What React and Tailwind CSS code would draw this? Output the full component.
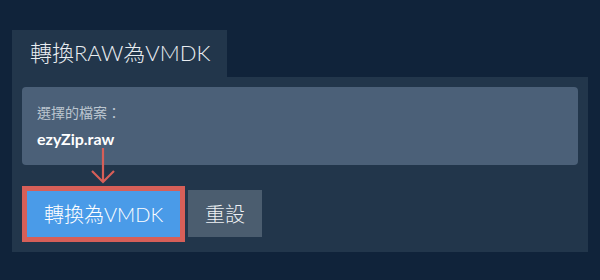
export default function App() {
  return (
    <div
      className="w-[600px] h-[280px] bg-[#10233a] pt-[30px] px-3"
      style={{ fontFamily: 'Lato, "Noto Sans CJK TC", sans-serif' }}
    >
      <div className="w-[215px] h-[47px] bg-[#22364b] flex items-center pl-[18px] pb-[2px] text-[22px] font-light text-[#e9edf1]">
        轉換RAW為VMDK
      </div>
      <div className="relative w-[576px] h-[175px] bg-[#22364b] p-[10px]">
        <div className="h-[78px] rounded-[4px] bg-[#4b6078] pl-[15px] pt-[16px]">
          <div className="text-[14px] leading-[20px] text-[#bcc6d0]">選擇的檔案：</div>
          <div className="mt-[6px] text-[16px] leading-[20px] font-bold text-white">ezyZip.raw</div>
        </div>
        <div className="flex gap-2 mt-[26px] ml-[5px]">
          <button className="w-[153px] h-[46px] bg-[#4a9be8] text-white text-[20px] font-light outline-[5px] outline-solid outline-[#d75f58]">
            轉換為VMDK
          </button>
          <button className="w-[74px] h-[47px] -mt-[1px] bg-[#4b5d6f] text-[#eef1f4] text-[20px] font-light">
            重設
          </button>
        </div>
        <svg className="absolute left-[79px] top-[70px]" width="30" height="38" viewBox="0 0 30 38">
          <path d="M12 1 V35 M1 24 L12 35 L23 24" fill="none" stroke="#d75f58" strokeWidth="2.2" />
        </svg>
      </div>
    </div>
  );
}
